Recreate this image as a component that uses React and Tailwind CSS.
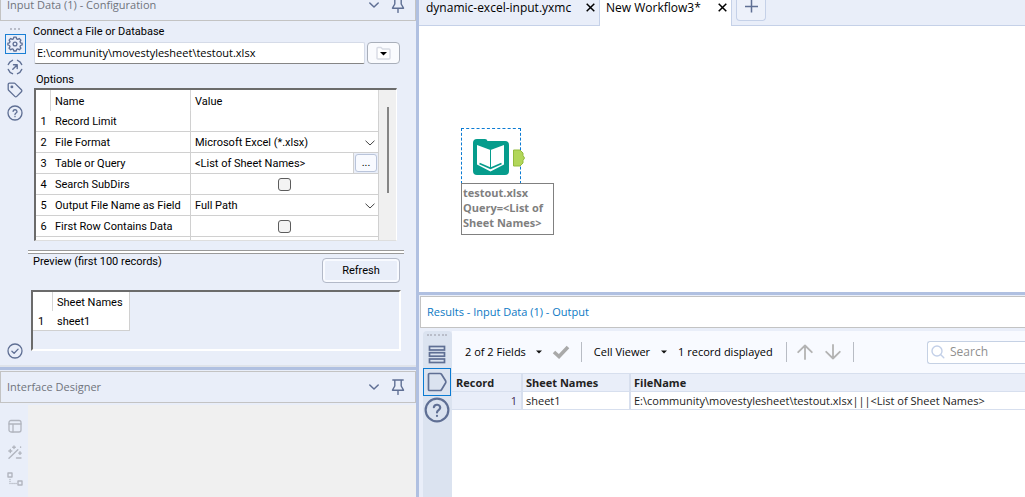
import React from "react";

const ink = "#5f6f94";

function Svg({ size, children, className = "", color = ink, width = 1.5, box = 24 }) {
  return (
    <svg
      className={"block shrink-0 " + className}
      width={size}
      height={size}
      viewBox={`0 0 ${box} ${box}`}
      fill="none"
      stroke={color}
      strokeWidth={width}
      strokeLinecap="round"
      strokeLinejoin="round"
      aria-hidden="true"
    >
      {children}
    </svg>
  );
}

function GearIcon() {
  return (
    <Svg size={16} box={16} width={1.3}>
      <path d="M6.8 1.2h2.4l.4 1.7 1.2.5 1.5-.9 1.6 1.6-.9 1.5.5 1.2 1.6.4v1.8l-1.6.5-.5 1.2.9 1.5-1.6 1.6-1.5-.9-1.2.5-.4 1.6H6.8l-.4-1.6-1.2-.5-1.5.9-1.6-1.6.9-1.5-.5-1.2L.9 9V7.2l1.6-.4.5-1.2-.9-1.500 1.600-1.600 1.500.9 1.200-.5z" />
      <circle cx="8" cy="8" r="1.900" />
    </Svg>
  );
}

function TargetIcon() {
  return (
    <Svg size={16} box={16} width={1.4}>
      <path d="M5.500 1.300A7 7 0 0 0 1.300 5.500M10.500 1.300A7 7 0 0 1 14.700 5.500M14.700 10.500A7 7 0 0 1 10.500 14.700M5.500 14.700A7 7 0 0 1 1.300 10.500M5.800 10.200l4-4M6.500 5.800h3.700v3.700" />
    </Svg>
  );
}

function TagIcon() {
  return (
    <Svg size={16} box={16} width={1.3}>
      <path d="M1.200 2.500a1.300 1.300 0 0 1 1.300-1.300h4.700c.4 0 .7.100 1 .4l6.200 6.200c.6.600.6 1.400 0 2l-4.600 4.600c-.6.600-1.400.6-2 0L1.600 8.200c-.3-.3-.4-.6-.4-1z" />
      <circle cx="4.900" cy="4.900" r=".8" fill={ink} />
    </Svg>
  );
}

function HelpIcon({ size, width }) {
  return (
    <Svg size={size} width={width}>
      <circle cx="12" cy="12" r="10.500" />
      <path d="M9.100 9.400a3 3 0 0 1 5.900.6c0 2-3 2.200-3 4.200M12 17.300v.2" />
    </Svg>
  );
}

function CheckCircle() {
  return (
    <Svg size={16} box={16} width={1.3}>
      <circle cx="8" cy="8" r="7" />
      <path d="M4.900 8.300l2.200 2 4-4.200" />
    </Svg>
  );
}

function ChevronDown() {
  return (
    <Svg size={10} box={10} width={1.5}>
      <path d="M.8 3l4.200 4 4.200-4" />
    </Svg>
  );
}

function PinIcon() {
  return (
    <Svg size={16} box={16} width={1.4}>
      <path d="M2.800 1h10.400M4.800 1.300v5.700L2.500 11.200h11L11.200 7V1.300M8 11.400v4" />
    </Svg>
  );
}

function CaretDown() {
  return (
    <svg className="block shrink-0" width="6" height="4" viewBox="0 0 6 4" aria-hidden="true">
      <path d="M0 .5h6L3 3.500z" fill="#111" />
    </svg>
  );
}

function PanelHeader({ title }) {
  return (
    <header className="flex h-8 shrink-0 items-center border border-[#c3c3c3] bg-[#e9eef9] pr-[9px] pl-[6px]">
      <h2 className="flex-1 font-['Open_Sans',sans-serif] text-[11px] leading-[10px] text-[#70747c]">{title}</h2>
      <button type="button" aria-label="Panel options" className="mr-[11px]">
        <ChevronDown />
      </button>
      <button type="button" aria-label="Pin panel">
        <PinIcon />
      </button>
    </header>
  );
}

function Dots({ className = "" }) {
  return <div className={"border-t-2 border-dotted border-[#b9bdc9] " + className} />;
}

function SelectCell({ label, options }) {
  return (
    <div className="relative h-full w-full">
      <select aria-label={label} className="h-full w-full appearance-none bg-white pt-[2px] pr-5 pl-1 outline-none">
        {options.map((o) => (
          <option key={o}>{o}</option>
        ))}
      </select>
      <div className="pointer-events-none absolute top-[6px] right-[3px]">
        <Svg size={10} box={10} width={1} color="#444">
          <path d="M.8 3l4.200 4 4.200-4" />
        </Svg>
      </div>
    </div>
  );
}

function CheckCell({ label }) {
  return (
    <div className="flex h-full items-center justify-center">
      <input
        type="checkbox"
        aria-label={label}
        className="size-[13px] appearance-none rounded-[3px] border border-[#5c5c5c] bg-[#f3f3f3]"
      />
    </div>
  );
}

const options = [
  { name: "Record Limit", value: null },
  { name: "File Format", value: <SelectCell label="File Format" options={["Microsoft Excel (*.xlsx)"]} /> },
  {
    name: "Table or Query",
    value: (
      <div className="flex h-full">
        <span className="flex-1 pt-[2px] pl-1 leading-[18px]">&lt;List of Sheet Names&gt;</span>
        <span className="flex border-l border-[#d0d0d0] bg-[#e9eef9] p-px">
          <button type="button" aria-label="Edit query" className="h-[18px] w-[22px] rounded-[3px] border border-[#b9c4da] bg-[#f8faff] leading-3">
            ...
          </button>
        </span>
      </div>
    ),
  },
  { name: "Search SubDirs", value: <CheckCell label="Search SubDirs" /> },
  { name: "Output File Name as Field", value: <SelectCell label="Output File Name as Field" options={["Full Path"]} /> },
  { name: "First Row Contains Data", value: <CheckCell label="First Row Contains Data" /> },
  { name: "", value: null },
];

function OptionsTable() {
  return (
    <div className="mr-[19px] ml-[6px] flex h-[153px] overflow-hidden border-t-2 border-r border-b border-l-2 border-t-[#6b6b6b] border-r-white border-b-[#dedede] border-l-[#6b6b6b] bg-white">
      <div className="min-w-0 flex-1">
        <table className="w-full table-fixed border-separate border-spacing-0">
          <colgroup>
            <col className="w-[15px]" />
            <col className="w-[140px]" />
            <col />
          </colgroup>
          <thead>
            <tr className="h-[21px] text-left leading-[18px]">
              <th className="border-r border-[#d6d6d6] p-0" />
              <th className="border-r border-[#d6d6d6] p-0 pt-[2px] pl-1 font-normal">Name</th>
              <th className="border-r border-[#d6d6d6] p-0 pt-[2px] pl-1 font-normal">Value</th>
            </tr>
          </thead>
          <tbody>
            {options.map((row, i) => (
              <tr key={i} className="h-[21px] leading-[18px]">
                <td className="h-[21px] border-b border-[#d0d0d0] p-0 pt-[2px] text-center">{row.name ? i + 1 : ""}</td>
                <td className="h-[21px] border-r border-b border-[#d0d0d0] p-0 pt-[2px] pl-1 whitespace-nowrap">{row.name}</td>
                <td className="h-[21px] border-r border-b border-[#d0d0d0] p-0">
                  <div className="h-5">{row.value}</div>
                </td>
              </tr>
            ))}
          </tbody>
        </table>
      </div>
      <div className="flex w-[17px] shrink-0 justify-center bg-[#f0f0f0] pt-[17px]">
        <div className="h-[86px] w-[2px] bg-[#858585]" />
      </div>
    </div>
  );
}

function Configuration() {
  return (
    <section className="flex shrink-0 flex-col">
      <div className="flex h-[21px] flex-col justify-end overflow-hidden">
        <PanelHeader title="Input Data (1) - Configuration" />
      </div>
      <div className="flex border-b-2 border-[#dfe3ea]">
        <nav className="flex w-7 shrink-0 flex-col items-center pt-[7px] pr-[2px] pl-1">
          <Dots className="mb-1 w-[10px]" />
          <button type="button" aria-label="Configuration" className="flex h-5 w-[21px] items-center justify-center border border-[#1a7fd4]">
            <GearIcon />
          </button>
          <button type="button" aria-label="Navigation" className="mt-[5px]">
            <TargetIcon />
          </button>
          <button type="button" aria-label="Annotation" className="mt-[7px]">
            <TagIcon />
          </button>
          <button type="button" aria-label="Help" className="mt-[7px]">
            <HelpIcon size={16} width={2} />
          </button>
          <button type="button" aria-label="Apply" className="mt-auto mb-[6px]">
            <CheckCircle />
          </button>
        </nav>
        <div className="flex min-w-0 flex-1 flex-col pb-[14px] font-[Roboto,sans-serif] text-[11px] text-black">
          <label htmlFor="path" className="mt-px mb-px pl-[5px] leading-[19px]">
            Connect a File or Database
          </label>
          <div className="mr-4 ml-[6px] flex gap-[2px]">
            <input
              id="path"
              defaultValue="E:\community\movestylesheet\testout.xlsx"
              className="h-[22px] min-w-0 flex-1 rounded-[2px] border border-[#d5dbe8] border-b-[#858585] bg-white px-[2px] pb-[2px] font-['Open_Sans',sans-serif] text-[11px] outline-none"
            />
            <button
              type="button"
              aria-label="Browse"
              className="flex h-[22px] w-[33px] items-center justify-center rounded-[4px] border border-[#a9afba] bg-[#fafbfe]"
            >
              <svg width="15" height="14" viewBox="0 0 15 14" aria-hidden="true">
                <path d="M1 2.500q0-1 1-1h3l1.500 1.500H13q1 0 1 1V12q0 1-1 1H2q-1 0-1-1z" fill="#fff" stroke="#d8dbe4" strokeWidth="1.400" />
                <path d="M4 6h7L7.500 9.500z" fill="#000" />
              </svg>
            </button>
          </div>
          <h3 className="mt-[6px] h-[18px] pl-[8px] leading-5">Options</h3>
          <OptionsTable />
          <div className="mt-[9px] mr-3 h-1 border-y border-[#9a9a9a] bg-white" />
          <div className="mr-4 flex items-start justify-between pl-[5px]">
            <h3 className="leading-4">Preview (first 100 records)</h3>
            <button type="button" className="mt-1 h-[25px] w-[78px] rounded-[4px] border border-[#b3b9c8] bg-[#e9eef9] pt-[2px] shadow-[inset_0_0_0_2px_#f8faff]">
              Refresh
            </button>
          </div>
          <div className="mt-[7px] mr-[15px] ml-[3px] h-[61px] border-2 border-t-[#6b6b6b] border-r-white border-b-white border-l-[#6b6b6b]">
            <table className="border-separate border-spacing-0 border-r border-b border-[#d0d0d0] bg-white leading-4">
              <thead>
                <tr className="h-[19px]">
                  <th className="w-5 border-r border-[#d6d6d6] p-0" />
                  <th className="w-[76px] p-0 pt-[2px] pl-1 text-left font-normal">Sheet Names</th>
                </tr>
              </thead>
              <tbody>
                <tr className="h-[19px]">
                  <td className="p-0 pt-[2px] pr-1 text-center">1</td>
                  <td className="p-0 pt-[2px] pl-1">sheet1</td>
                </tr>
              </tbody>
            </table>
          </div>
        </div>
      </div>
    </section>
  );
}

function InterfaceDesigner() {
  const c = "#b1b5bf";
  return (
    <section className="flex min-h-0 flex-1 flex-col border-t-[3px] border-[#b0c0e1]">
      <div className="pt-px">
        <PanelHeader title="Interface Designer" />
      </div>
      <div className="flex flex-1 pt-[2px]">
        <nav className="flex w-7 shrink-0 flex-col items-center gap-3 pt-[14px] pl-[2px]">
          <button type="button" aria-label="Layout view" disabled>
            <Svg size={14} box={14} width={1.3} color={c}>
              <rect x="1" y="1.500" width="12" height="11.500" rx="2" />
              <path d="M1 5h12M5 5v8" />
            </Svg>
          </button>
          <button type="button" aria-label="Test view" disabled>
            <Svg size={14} box={14} width={1.4} color={c}>
              <path d="M1 13.200L9.800 4.800M2.300 4.500v3M.8 6h3M6 .9v2.600M4.700 2.200h2.600M12 6.800v2.600M10.700 8.100h2.600M8.500 13h4.500M12.600 2v.3" />
            </Svg>
          </button>
          <button type="button" aria-label="Tree view" disabled>
            <Svg size={16} box={16} width={1.4} color={c}>
              <rect x="1" y="2" width="4" height="4" />
              <rect x="11" y="10" width="4" height="4" />
              <path d="M3 8.500v.1M3 10.500v.1M3 12.500v.1M5 12.500h.1M7 12.500h.1M9 12.500h.1" />
            </Svg>
          </button>
        </nav>
        <div className="flex-1 bg-[#f0f0f0]" />
      </div>
    </section>
  );
}

function CloseX({ label }) {
  return (
    <button type="button" aria-label={label} className="mt-[3px] block shrink-0">
      <svg className="block" width="9" height="9" viewBox="0 0 9 9" aria-hidden="true">
        <path d="M.7.7l7.600 7.600M8.300.7L.7 8.300" stroke="#000" strokeWidth="1.500" />
      </svg>
    </button>
  );
}

function Tabs() {
  return (
    <div className="flex h-[26px] shrink-0 bg-[#e9eef9] font-['Open_Sans',sans-serif] text-[12px] text-black">
      <div className="flex w-[181px] items-start justify-between border-r border-b border-[#c5d1e8] pr-1 pl-[7px]">
        <span className="leading-4">dynamic-excel-input.yxmc</span>
        <CloseX label="Close dynamic-excel-input.yxmc" />
      </div>
      <div className="flex w-[132px] items-start justify-between border-r border-[#c5d1e8] bg-white pr-1 pl-[6px]">
        <span className="leading-4">New Workflow3*</span>
        <CloseX label="Close New Workflow3*" />
      </div>
      <div className="flex-1 border-b border-[#c5d1e8] pl-1">
        <button type="button" aria-label="New tab" className="flex h-[21px] w-[30px] items-start justify-center rounded-b-[4px] border border-t-0 border-[#c5d1e8] bg-[#edf1fa]">
          <svg width="13" height="13" viewBox="0 0 13 13" aria-hidden="true">
            <path d="M6.500 0v12.500M0 6.500h13" stroke={ink} strokeWidth="1.500" />
          </svg>
        </button>
      </div>
    </div>
  );
}

function Canvas() {
  return (
    <div className="relative min-h-0 flex-1 bg-white">
      <div className="absolute top-[102px] left-[42px] h-14 w-[60px] border border-dashed border-[#0b7bd3]">
        <svg className="absolute top-[10px] left-[10px]" width="38" height="38" viewBox="0 0 38 38" aria-hidden="true">
          <path d="M1 4q0-4 4-4h8q2 0 2.500 2H33q4 0 4 4v26q0 4-4 4H5q-4 0-4-4z" fill="#069c8c" />
          <path d="M5 6l13.500 5L32 6v19.500L18.500 32.500 5 25.500z" fill="#fff" />
          <path d="M18.500 11v18" stroke="#069c8c" strokeWidth="1" />
          <path d="M7.500 24.500l11 4.800 11-4.800" fill="none" stroke="#069c8c" strokeWidth="1.600" />
        </svg>
        <svg className="absolute top-5 left-[51px]" width="13" height="18" viewBox="0 0 13 18" aria-hidden="true">
          <path d="M.5 1h6.500l3 3v2.500l1.500 2.500-1.500 2.500v2.500l-3 3H.5z" fill="#b2d659" stroke="#93bb3d" />
        </svg>
      </div>
      <div className="absolute top-[157px] left-[42px] h-[52px] w-[93px] border border-[#808080] bg-white pt-px pl-px font-['Open_Sans',sans-serif] text-[11px] leading-[15px] font-bold text-[#7f7f7f]">
        testout.xlsx
        <br />
        Query=&lt;List of
        <br />
        Sheet Names&gt;
      </div>
    </div>
  );
}

function Divider({ className = "" }) {
  return <div className={"h-5 w-px bg-[#b8bcc4] " + className} />;
}

function Results() {
  return (
    <section className="flex h-[205px] shrink-0 flex-col border-t-[3px] border-[#b0c0e1] bg-[#e9eef9] pt-px pl-px font-['Open_Sans',sans-serif]">
      <header className="flex h-8 shrink-0 items-center border border-r-0 border-[#c3c3c3] bg-white pl-[6px]">
        <h2 className="text-[11px] text-[#0b79c4]">Results - Input Data (1) - Output</h2>
      </header>
      <div className="flex min-h-0 flex-1 pt-[3px] pl-[3px]">
        <nav className="flex w-[29px] shrink-0 flex-col rounded-t-[4px] bg-[#dbe3f0] pt-[3px] pr-px">
          <Dots className="mx-1 mb-[9px]" />
          <button type="button" aria-label="Messages" className="mx-auto mb-1">
            <svg className="block" width="18" height="19" viewBox="0 0 18 19" fill="none" stroke={ink} strokeWidth="1.700" aria-hidden="true">
              <rect x="1.500" y="1.500" width="15" height="3.500" />
              <rect x="1.500" y="7.700" width="15" height="3.500" />
              <rect x="1.500" y="14" width="15" height="3.500" />
            </svg>
          </button>
          <button type="button" aria-label="Output" className="flex h-7 w-7 items-center justify-center border border-[#0b7bd3]">
            <Svg size={20} box={20} width={1.7}>
              <path d="M2.500 1.500h10.500q1 0 1.500.8L18.700 9q.3.900 0 1.800l-4.200 6.900q-.5.800-1.500.8H2.500q-1 0-1-1v-15q0-1 1-1z" />
            </Svg>
          </button>
          <button type="button" aria-label="Help" className="mx-auto mt-px">
            <HelpIcon size={26} width={2} />
          </button>
        </nav>
        <div className="flex min-w-0 flex-1 flex-col bg-white">
          <div className="flex h-[42px] shrink-0 items-center bg-[#f8faff] pl-[13px] text-[11px] whitespace-nowrap text-black">
            <button type="button" className="flex items-center gap-[10px]">
              2 of 2 Fields <CaretDown />
            </button>
            <button type="button" aria-label="Apply fields" className="ml-[10px]" disabled>
              <svg className="block" width="18" height="14" viewBox="0 0 18 14" aria-hidden="true">
                <path d="M2 7l5 4.500L16 2" fill="none" stroke="#a9a9a9" strokeWidth="3.600" />
              </svg>
            </button>
            <Divider className="ml-[11px]" />
            <button type="button" className="ml-[12px] flex items-center gap-[11px]">
              Cell Viewer <CaretDown />
            </button>
            <span className="ml-[11px]">1 record displayed</span>
            <Divider className="ml-[13px]" />
            <button type="button" aria-label="Previous" className="ml-[10px]" disabled>
              <Svg size={16} box={16} width={1.8} color="#b3b3b3">
                <path d="M8 15V1.500M1.200 8.200L8 1.500l6.800 6.700" />
              </Svg>
            </button>
            <button type="button" aria-label="Next" className="ml-3" disabled>
              <Svg size={16} box={16} width={1.8} color="#b3b3b3">
                <path d="M8 1v13.500M1.200 7.800L8 14.500l6.800-6.700" />
              </Svg>
            </button>
            <Divider className="ml-3" />
            <label className="ml-auto flex h-[23px] w-[98px] shrink-0 items-center rounded-l-[3px] border border-r-0 border-[#c5d1e4] bg-white pl-[3px]">
              <Svg size={14} box={14} width={1.4} color="#c3d0e8">
                <circle cx="6" cy="6" r="5" />
                <path d="M9.800 9.800l3 3" />
              </Svg>
              <input aria-label="Search" placeholder="Search" className="ml-[5px] w-16 bg-transparent text-[12px] outline-none placeholder:text-[#8f8f8f]" />
            </label>
          </div>
          <table className="w-full table-fixed border-separate border-spacing-0 text-[11px] leading-4 text-[#222]">
            <colgroup>
              <col className="w-[71px]" />
              <col className="w-[108px]" />
              <col />
            </colgroup>
            <thead>
              <tr className="h-[19px] bg-[#e9eef9] text-left">
                <th className="border-t border-r-2 border-b border-[#d7dfee] p-0 pl-1">Record</th>
                <th className="border-t border-r-2 border-b border-[#d7dfee] p-0 pl-[3px]">Sheet Names</th>
                <th className="border-t border-b border-[#d7dfee] p-0 pl-[3px]">FileName</th>
              </tr>
            </thead>
            <tbody>
              <tr className="h-[18px]">
                <td className="border-r-2 border-b border-[#d7dfee] bg-[#e9eef9] p-0 pr-1 text-right text-[#3f2a55]">1</td>
                <td className="border-r-2 border-b border-[#d7dfee] p-0 pl-[3px]">sheet1</td>
                <td className="border-b border-[#d7dfee] p-0 pl-[3px]">E:\community\movestylesheet\testout.xlsx|||&lt;List of Sheet Names&gt;</td>
              </tr>
            </tbody>
          </table>
        </div>
      </div>
    </section>
  );
}

export default function App() {
  return (
    <div className="flex h-screen overflow-hidden bg-[#e9eef9]">
      <aside className="flex w-[419px] shrink-0 flex-col border-r-[3px] border-[#b0c0e1]">
        <Configuration />
        <InterfaceDesigner />
      </aside>
      <main className="flex min-w-0 flex-1 flex-col">
        <Tabs />
        <Canvas />
        <Results />
      </main>
    </div>
  );
}
